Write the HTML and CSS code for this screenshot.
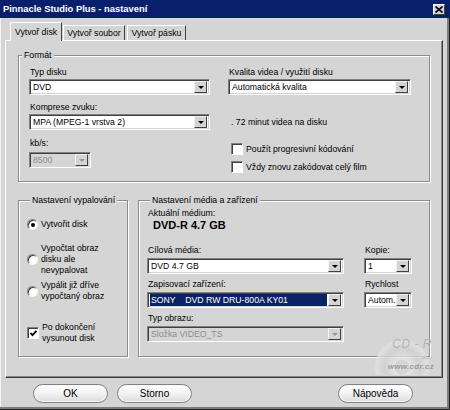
FILE: index.html
```html
<!DOCTYPE html>
<html lang="cs">
<head>
<meta charset="utf-8">
<title>Pinnacle Studio Plus - nastavení</title>
<link rel="stylesheet" href="styles.css">
</head>
<body>
<div class="window">
  <div class="titlebar">
    <span class="title">Pinnacle Studio Plus - nastavení</span>
    <span class="close"><svg width="8" height="7" viewBox="0 0 8 7"><path d="M0.5 0.5 L7.5 6.5 M7.5 0.5 L0.5 6.5" stroke="#000" stroke-width="1.6"/></svg></span>
  </div>
  <div class="tabs">
    <div class="tab active t1">Vytvoř disk</div>
    <div class="tab t2">Vytvoř soubor</div>
    <div class="tab t3">Vytvoř pásku</div>
  </div>
  <div class="panel">
    <div class="group format">
      <div class="legend">Formát</div>
      <div class="format-grid">
        <div class="col">
          <div class="lbl">Typ disku</div>
          <div class="select"><span class="val">DVD</span><span class="drop"></span></div>
          <div class="lbl m7">Komprese zvuku:</div>
          <div class="select"><span class="val">MPA (MPEG-1 vrstva 2)</span><span class="drop"></span></div>
          <div class="lbl m8 mb3">kb/s:</div>
          <div class="select dis small"><span class="val">8500</span><span class="drop"></span></div>
        </div>
        <div class="col">
          <div class="lbl">Kvalita videa / využití disku</div>
          <div class="select"><span class="val">Automatická kvalita</span><span class="drop"></span></div>
          <div class="info">. 72 minut videa na disku</div>
          <div class="check-row cr1"><span class="cb"></span><span>Použít progresivní kódování</span></div>
          <div class="check-row cr2"><span class="cb"></span><span>Vždy znovu zakódovat celý film</span></div>
        </div>
      </div>
    </div>
    <div class="lower">
      <div class="group burn">
        <div class="legend">Nastavení vypalování</div>
        <div class="opt o1"><span class="radio on"></span><span class="otext">Vytvořit disk</span></div>
        <div class="opt o2"><span class="radio"></span><span class="otext">Vypočtat obraz<br>disku ale<br>nevypalovat</span></div>
        <div class="opt o3"><span class="radio"></span><span class="otext">Vypálit již dříve<br>vypočtaný obraz</span></div>
        <div class="opt o4"><span class="cb on"><svg width="9" height="9" viewBox="0 0 9 9"><path d="M1.5 4 L3.5 6.2 L7.5 1.8" stroke="#000" stroke-width="1.8" fill="none"/></svg></span><span class="otext">Po dokončení<br>vysunout disk</span></div>
      </div>
      <div class="group media">
        <div class="legend">Nastavení média a zařízení</div>
        <div class="lbl cur">Aktuální médium:</div>
        <div class="big">DVD-R 4.7 GB</div>
        <div class="media-grid">
          <div class="field">
            <div class="lbl">Cílová média:</div>
            <div class="select"><span class="val">DVD 4.7 GB</span><span class="drop"></span></div>
          </div>
          <div class="field">
            <div class="lbl">Kopie:</div>
            <div class="select"><span class="val">1</span><span class="drop"></span></div>
          </div>
          <div class="field">
            <div class="lbl">Zapisovací zařízení:</div>
            <div class="select sel"><span class="val hl">SONY&nbsp;&nbsp;&nbsp;&nbsp;DVD RW DRU-800A KY01</span><span class="drop"></span></div>
          </div>
          <div class="field">
            <div class="lbl">Rychlost</div>
            <div class="select"><span class="val">Autom.</span><span class="drop"></span></div>
          </div>
          <div class="field">
            <div class="lbl">Typ obrazu:</div>
            <div class="select dis"><span class="val">Složka VIDEO_TS</span><span class="drop"></span></div>
          </div>
        </div>
      </div>
    </div>
    <div class="watermark">
      <span class="disc"></span>
      <span class="wm-cd">CD - R</span>
      <span class="wm-srv">server</span>
      <span class="wm-url">www.cdr.cz</span>
    </div>
  </div>
  <div class="buttons">
    <div class="btn">OK</div>
    <div class="btn">Storno</div>
    <div class="btn help">Nápověda</div>
  </div>
</div>
</body>
</html>
```

FILE: styles.css
```css
html, body {
  margin: 0;
  padding: 0;
  background: #d5d5d5;
}
body {
  font-family: "Liberation Sans", Arial, sans-serif;
  font-size: 8.7px;
  color: #000;
}
.window {
  width: 450px;
  height: 410px;
  box-sizing: border-box;
  background: #d5d5d5;
  box-shadow: inset -1px -1px 0 #202020, inset -3px -3px 0 #7c7c7c, inset 1px 0 0 #f4f4f4;
  overflow: hidden;
}
.titlebar {
  height: 18px;
  background: #0a1f6c;
  display: flex;
  align-items: center;
  padding-left: 3px;
}
.title {
  color: #fff;
  font-weight: bold;
  font-size: 9.4px;
  flex: 1;
  line-height: 18px;
}
.close {
  width: 12px;
  height: 11px;
  box-sizing: border-box;
  background: #d4d4d4;
  border: 1px solid;
  border-color: #fff #404040 #404040 #fff;
  margin-right: 5px;
  display: flex;
  align-items: center;
  justify-content: center;
}
.tabs {
  display: flex;
  align-items: flex-end;
  height: 18px;
  margin-top: 4px;
  padding-left: 10px;
}
.tab {
  height: 15px;
  box-sizing: border-box;
  border: 1px solid;
  border-color: #fff #404040 transparent #fff;
  border-bottom: none;
  display: flex;
  align-items: center;
  justify-content: center;
  line-height: 11px;
  background: #d5d5d5;
}
.tab.active {
  height: 19px;
  margin-bottom: -1px;
  position: relative;
  z-index: 1;
  padding-top: 1px;
}
.t1 { width: 52px; }
.t2 { width: 62px; margin-left: 1px; }
.t3 { width: 59px; margin-left: 2px; }

.panel {
  position: relative;
  margin-left: 5px;
  width: 438px;
  height: 338px;
  box-sizing: border-box;
  border: 1px solid;
  border-color: #fff #3a3a3a #3a3a3a #fff;
  box-shadow: inset -1px -1px 0 #8a8a8a;
  padding-top: 14px;
  padding-left: 12px;
}
.group {
  border: 1px solid #8c8c8c;
  box-shadow: inset 1px 1px 0 #fff, 1px 1px 0 #fff;
  box-sizing: border-box;
}
.legend {
  width: max-content;
  margin: -6px 0 0 3px;
  padding: 0 2px;
  background: #d5d5d5;
  line-height: 11px;
  height: 11px;
}
.format {
  width: 412px;
  height: 127px;
}
.format-grid {
  display: grid;
  grid-template-columns: 181px 183px;
  column-gap: 18px;
  padding: 6px 0 0 10px;
}
.col {
  display: flex;
  flex-direction: column;
  align-items: flex-start;
}
.lbl {
  line-height: 11px;
  height: 11px;
  margin-bottom: 1px;
  white-space: nowrap;
  padding-left: 1px;
}
.m7 { margin-top: 7px; }
.m8 { margin-top: 8px; }
.mb3 { margin-bottom: 3px; }

.select {
  width: 100%;
  height: 16px;
  box-sizing: border-box;
  display: flex;
  align-items: center;
  background: #fff;
  border: 1px solid;
  border-color: #808080 #fff #fff #808080;
  box-shadow: inset 1px 1px 0 #404040, inset -1px -1px 0 #d4d4d4;
  padding: 1px 2px 1px 3px;
}
.select.small { width: 62px; }
.val {
  flex: 1;
  white-space: nowrap;
  overflow: hidden;
  line-height: 12px;
  height: 12px;
}
.select.sel { padding-left: 2px; }
.val.hl {
  background: #0c2266;
  color: #fff;
  padding-left: 1px;
  margin-right: 1px;
}
.drop {
  width: 13px;
  height: 12px;
  box-sizing: border-box;
  background: #d4d4d4;
  border: 1px solid;
  border-color: #f4f4f4 #404040 #404040 #f4f4f4;
  display: flex;
  align-items: center;
  justify-content: center;
  flex: none;
}
.drop::after {
  content: "";
  border-left: 3px solid transparent;
  border-right: 3px solid transparent;
  border-top: 3px solid #000;
}
.select.dis {
  background: #d5d5d5;
  color: #8e8e8e;
}
.select.dis .drop::after { border-top-color: #9a9a9a; }

.info {
  margin-top: 22px;
  line-height: 11px;
  padding-left: 3px;
}
.check-row {
  display: flex;
  align-items: center;
  gap: 3px;
  padding-left: 3px;
  height: 13px;
  white-space: nowrap;
}
.cr1 { margin-top: 14px; }
.cr2 { margin-top: 5px; }
.cb {
  width: 12px;
  height: 12px;
  box-sizing: border-box;
  background: #fff;
  border: 1px solid;
  border-color: #808080 #fff #fff #808080;
  box-shadow: inset 1px 1px 0 #404040;
  display: flex;
  align-items: center;
  justify-content: center;
  flex: none;
}

.lower {
  display: flex;
  gap: 10px;
  margin-top: 18px;
}
.burn {
  width: 110px;
  height: 157px;
  padding-left: 8px;
}
.opt {
  display: flex;
  align-items: center;
  gap: 3px;
}
.otext { line-height: 11px; }
.o1 { margin-top: 13px; }
.o2 { margin-top: 13px; }
.o3 { margin-top: 4px; }
.o4 { margin-top: 20px; }
.radio {
  width: 11px;
  height: 11px;
  box-sizing: border-box;
  border-radius: 50%;
  background: #fff;
  border: 1px solid;
  border-color: #808080 #f4f4f4 #f4f4f4 #808080;
  box-shadow: inset 1px 1px 0 #404040;
  display: flex;
  align-items: center;
  justify-content: center;
  flex: none;
}
.radio.on::after {
  content: "";
  width: 4px;
  height: 4px;
  border-radius: 50%;
  background: #000;
}

.media {
  width: 292px;
  height: 157px;
  padding-left: 8px;
}
.cur { margin-top: 2px; }
.big {
  font-weight: bold;
  font-size: 11px;
  line-height: 13px;
  padding-left: 6px;
  margin-top: -1px;
}
.media-grid {
  display: grid;
  grid-template-columns: 197px 48px;
  column-gap: 20px;
  row-gap: 5px;
  margin-top: 13px;
}
.field .lbl { margin-bottom: 2px; }

.watermark {
  position: absolute;
  right: 4px;
  bottom: 2px;
  width: 66px;
  height: 44px;
  overflow: hidden;
  color: #a8a8a8;
  font-style: italic;
}
.disc {
  position: absolute;
  left: 2px;
  top: 8px;
  width: 56px;
  height: 56px;
  border-radius: 50%;
  background: radial-gradient(circle at 50% 50%, transparent 0 7px, #e6e6e6 8px, #d0d0d0 18px, #e2e2e2 26px, transparent 28px);
  opacity: 0.8;
}
.wm-cd {
  position: absolute;
  right: 6px;
  top: 6px;
  font-size: 12px;
  color: #b4b4b4;
  letter-spacing: 0.5px;
}
.wm-srv {
  position: absolute;
  right: 6px;
  top: 24px;
  font-size: 4px;
}
.wm-url {
  position: absolute;
  right: 4px;
  top: 31px;
  font-size: 8px;
  font-weight: bold;
  color: #9c9c9c;
  letter-spacing: 0.3px;
}

.buttons {
  display: flex;
  margin-top: 6px;
  padding: 0 37px 0 33px;
  gap: 9px;
}
.btn {
  width: 75px;
  height: 19px;
  box-sizing: border-box;
  border: 1px solid #808080;
  border-radius: 10px;
  background: linear-gradient(#ffffff, #f2f2f2 50%, #dcdcdc);
  box-shadow: inset 0 0 0 1px #f8f8f8;
  display: flex;
  align-items: center;
  justify-content: center;
  font-size: 10px;
}
.btn.help { margin-left: auto; }
```
